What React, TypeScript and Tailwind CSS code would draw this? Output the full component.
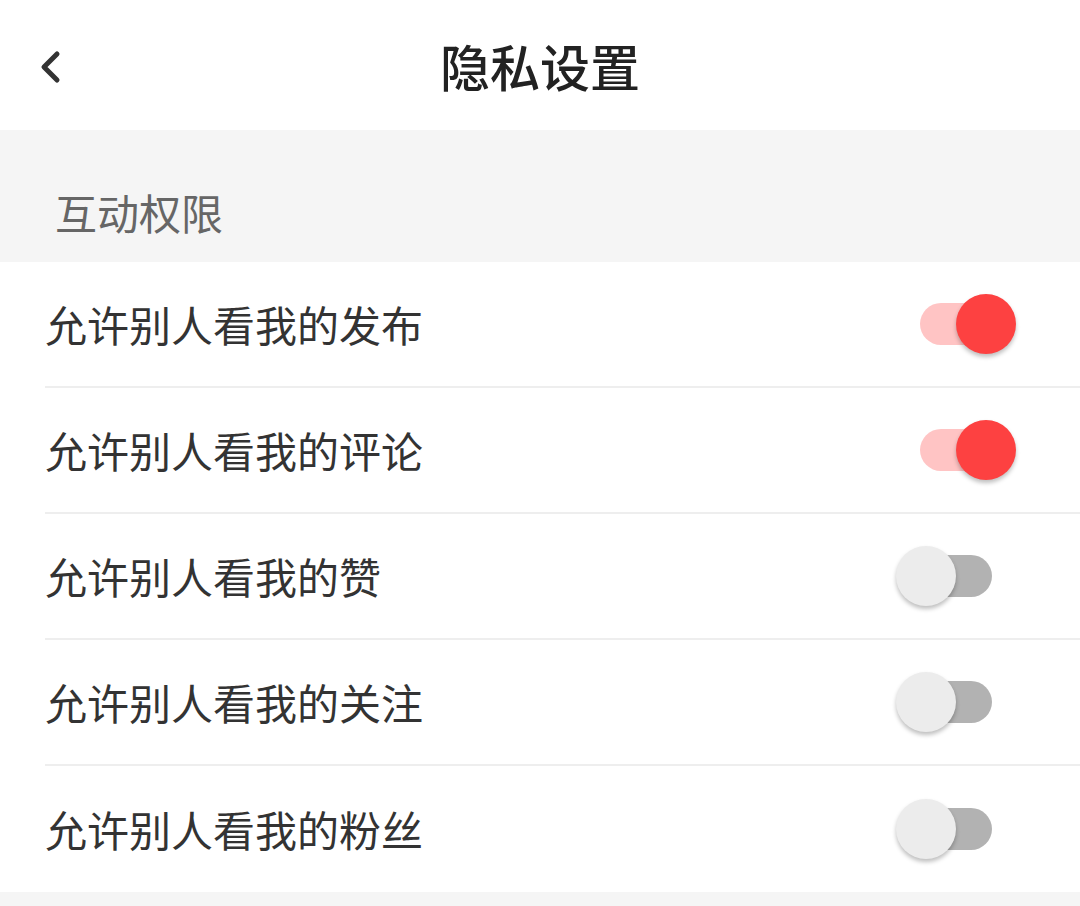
import { useState } from "react";

const ITEMS = [
  { label: "允许别人看我的发布", on: true },
  { label: "允许别人看我的评论", on: true },
  { label: "允许别人看我的赞", on: false },
  { label: "允许别人看我的关注", on: false },
  { label: "允许别人看我的粉丝", on: false },
];

function Switch({ on, onToggle }: { on: boolean; onToggle: () => void }) {
  return (
    <button
      onClick={onToggle}
      className={`relative h-[42px] w-[72px] rounded-full ${on ? "bg-[#ffc4c4]" : "bg-[#b2b2b2]"}`}
    >
      <span
        className={`absolute top-1/2 h-[60px] w-[60px] -translate-y-1/2 rounded-full shadow-[0_3px_4px_rgba(0,0,0,0.25)] ${
          on ? "left-[36px] bg-[#fd4141]" : "left-[-24px] bg-[#ececec]"
        }`}
      />
    </button>
  );
}

export default function App() {
  const [items, setItems] = useState(ITEMS);

  const toggle = (i: number) =>
    setItems((prev) => prev.map((it, idx) => (idx === i ? { ...it, on: !it.on } : it)));

  return (
    <div
      className="min-h-[906px] w-full bg-[#f5f5f5]"
      style={{ fontFamily: '"Noto Sans CJK SC", "Noto Sans", sans-serif' }}
    >
      {/* Header */}
      <div className="relative flex h-[130px] items-center justify-center bg-white">
        <button className="absolute left-[32px] top-[46px] text-[#333]">
          <svg width="38" height="42" viewBox="0 0 38 42" fill="none">
            <path d="M25 8 L12 21 L25 34" stroke="currentColor" strokeWidth="5" strokeLinecap="round" strokeLinejoin="round" />
          </svg>
        </button>
        <h1 className="text-[50px] font-medium leading-none text-[#222]">隐私设置</h1>
      </div>

      {/* Section title */}
      <div className="flex h-[132px] items-end px-[55px] pb-[29px]">
        <span className="text-[42px] leading-none text-[#666]">互动权限</span>
      </div>

      {/* Rows */}
      <div className="bg-white">
        {items.map((it, i) => (
          <div key={it.label} className="pl-[45px]">
            <div
              className={`flex h-[126px] items-center justify-between pr-[88px] ${
                i < items.length - 1 ? "border-b-2 border-[#eeeeee]" : ""
              }`}
            >
              <span className="text-[42px] leading-none text-[#333]">{it.label}</span>
              <Switch on={it.on} onToggle={() => toggle(i)} />
            </div>
          </div>
        ))}
      </div>
    </div>
  );
}
